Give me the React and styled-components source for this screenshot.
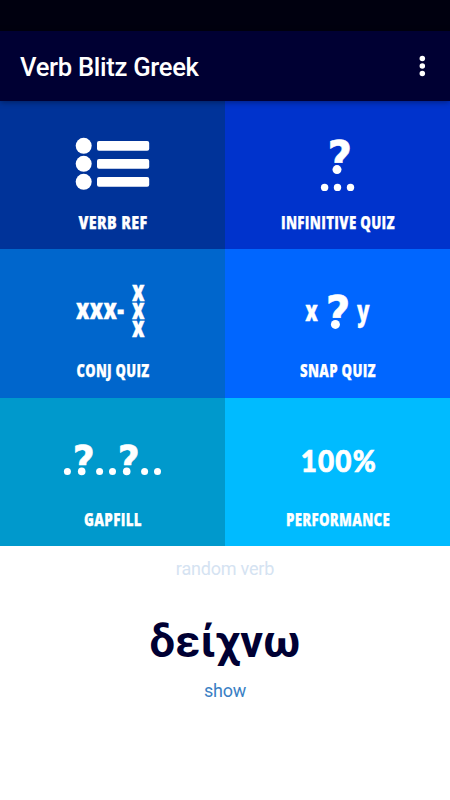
import React from "react";
import styled, { createGlobalStyle } from "styled-components";

const GlobalStyle = createGlobalStyle`
  * {
    box-sizing: border-box;
  }
  body {
    margin: 0;
    background: #fff;
    font-family: Roboto, "Liberation Sans", sans-serif;
  }
`;

const Screen = styled.div`
  width: 450px;
  height: 800px;
  display: flex;
  flex-direction: column;
`;

const StatusBar = styled.div`
  height: 31px;
  background: #00000f;
`;

const Toolbar = styled.header`
  height: 70px;
  padding: 2px 20px 0;
  display: flex;
  align-items: center;
  justify-content: space-between;
  background: #000033;
  box-shadow: 0 1px 6px rgba(0, 0, 0, 0.4);
  z-index: 1;
`;

const Title = styled.h1`
  margin: 0;
  color: #fff;
  font-size: 25.6px;
  font-weight: 500;
  letter-spacing: -0.3px;
  line-height: 30px;
`;

const MenuButton = styled.button`
  display: flex;
  padding: 0 0 2px;
  border: 0;
  background: none;
`;

const Grid = styled.main`
  height: 445px;
  display: grid;
  grid-template-columns: 1fr 1fr;
  grid-template-rows: repeat(3, 1fr);
`;

const Tile = styled.div`
  display: flex;
  flex-direction: column;
  align-items: center;
  padding-top: 30px;
  background: ${(props) => props.$color};
`;

const Icon = styled.svg`
  width: 121px;
  height: 70px;
  overflow: visible;
  fill: #fff;
`;

const Label = styled.svg`
  width: 140px;
  height: 24px;
  margin-top: 10px;
  overflow: visible;
  fill: #fff;
`;

// Text squeezed to a fixed width, for the condensed lettering on the tiles
const FitText = styled.text.attrs({ lengthAdjust: "spacingAndGlyphs" })`
  font-weight: 900;
`;

const LabelText = styled(FitText)`
  font-family: "Open Sans", "Noto Sans", sans-serif;
  font-size: 17.6px;
  letter-spacing: 0.4px;
  stroke: #fff;
  stroke-width: 0.25px;
`;

const Letters = styled(FitText)`
  font-family: "Open Sans", "Noto Sans", sans-serif;
  font-size: 27.4px;
  letter-spacing: 0.6px;
  stroke: #fff;
  stroke-width: 0.3px;
`;

const Percent = styled(FitText)`
  font-family: Lato, sans-serif;
  font-size: 30px;
  letter-spacing: 1.2px;
  stroke: #fff;
  stroke-width: 0.7px;
`;

// The font's square dot is clipped away, a round one is drawn in its place
const Question = styled(FitText)`
  font-family: "DejaVu Sans", sans-serif;
  font-size: ${(props) => props.$size}px;
  stroke: #fff;
  stroke-width: 0.6px;
  clip-path: inset(0 0 39% 0);
`;

const RandomVerb = styled.section`
  display: flex;
  flex-direction: column;
  align-items: center;
`;

const Caption = styled.p`
  margin: 12px 0 0;
  color: #d5e3f2;
  font-size: 18px;
  letter-spacing: -0.2px;
  line-height: 22px;
`;

const Verb = styled.p`
  margin: 32px 0 0;
  color: #000033;
  font-size: 45px;
  font-weight: 700;
  letter-spacing: 0.3px;
  line-height: 60px;
`;

const ShowLink = styled.a`
  margin-top: 8px;
  color: #3a80c4;
  font-size: 18px;
  letter-spacing: -0.3px;
  line-height: 22px;
`;

const Dots = ({ xs, y, r }) =>
  xs.map((x) => <circle key={x} cx={x} cy={y} r={r} />);

const ListIcon = () => (
  <Icon viewBox="0 0 121 70">
    {[14.8, 32.8, 50.8].map((y) => (
      <g key={y}>
        <circle cx="31.7" cy={y} r="8" />
        <rect x="45" y={y - 4.9} width="52.2" height="9.8" rx="2" />
      </g>
    ))}
  </Icon>
);

const InfinitiveIcon = () => (
  <Icon viewBox="0 0 121 70">
    <Question x="50.4" y="42.8" textLength="24.6" $size={46.5}>
      ?
    </Question>
    <Dots xs={[60]} y={38.6} r={4.5} />
    <Dots xs={[47.6, 60.5, 73.5]} y={56.4} r={3.7} />
  </Icon>
);

const ConjugationIcon = () => (
  <Icon viewBox="0 0 121 70">
    <Letters x="24" y="40.3" textLength="48.5">
      xxx-
    </Letters>
    {[22.3, 40.3, 58.1].map((y) => (
      <Letters key={y} x="80" y={y} textLength="13">
        x
      </Letters>
    ))}
  </Icon>
);

const SnapIcon = () => (
  <Icon viewBox="0 0 121 70">
    <Letters x="28.3" y="41.8" textLength="13">
      x
    </Letters>
    <Question x="48.8" y="49.5" textLength="24.6" $size={46.5}>
      ?
    </Question>
    <Dots xs={[58.4]} y={45.4} r={4.5} />
    <Letters x="80" y="41.8" textLength="13">
      y
    </Letters>
  </Icon>
);

const GapfillIcon = () => (
  <Icon viewBox="0 0 121 70">
    {[29.7, 74.7].map((x) => (
      <Question key={x} x={x - 8.9} y="46.8" textLength="22" $size={41}>
        ?
      </Question>
    ))}
    <Dots xs={[29.7, 74.7]} y={43.4} r={3.8} />
    <Dots xs={[15.4, 47.6, 60.5, 92.6, 105.5]} y={43.6} r={3.5} />
  </Icon>
);

const PercentIcon = () => (
  <Icon viewBox="0 0 121 70">
    <Percent x="23.8" y="43.5" textLength="76">
      100%
    </Percent>
  </Icon>
);

const tiles = [
  { label: "VERB REF", width: 69, color: "#003399", icon: ListIcon },
  { label: "INFINITIVE QUIZ", width: 114, color: "#0033cc", icon: InfinitiveIcon },
  { label: "CONJ QUIZ", width: 73, color: "#0066cc", icon: ConjugationIcon },
  { label: "SNAP QUIZ", width: 76, color: "#0066ff", icon: SnapIcon },
  { label: "GAPFILL", width: 58, color: "#0099cc", icon: GapfillIcon },
  { label: "PERFORMANCE", width: 104, color: "#00bbff", icon: PercentIcon },
];

const App = () => {
  return (
    <>
      <GlobalStyle />
      <Screen>
        <StatusBar />
        <Toolbar>
          <Title>Verb Blitz Greek</Title>
          <MenuButton aria-label="Menu">
            <svg width="15" height="24" fill="#fff">
              <Dots xs={[7.3]} y={4.4} r={2.75} />
              <Dots xs={[7.3]} y={12} r={2.75} />
              <Dots xs={[7.3]} y={19.6} r={2.75} />
            </svg>
          </MenuButton>
        </Toolbar>
        <Grid>
          {tiles.map(({ label, width, color, icon: TileIcon }) => (
            <Tile key={label} $color={color}>
              <TileIcon />
              <Label>
                <LabelText x={70 - width / 2} y="18" textLength={width}>
                  {label}
                </LabelText>
              </Label>
            </Tile>
          ))}
        </Grid>
        <RandomVerb>
          <Caption>random verb</Caption>
          <Verb>δείχνω</Verb>
          <ShowLink>show</ShowLink>
        </RandomVerb>
      </Screen>
    </>
  );
};

export default App;
